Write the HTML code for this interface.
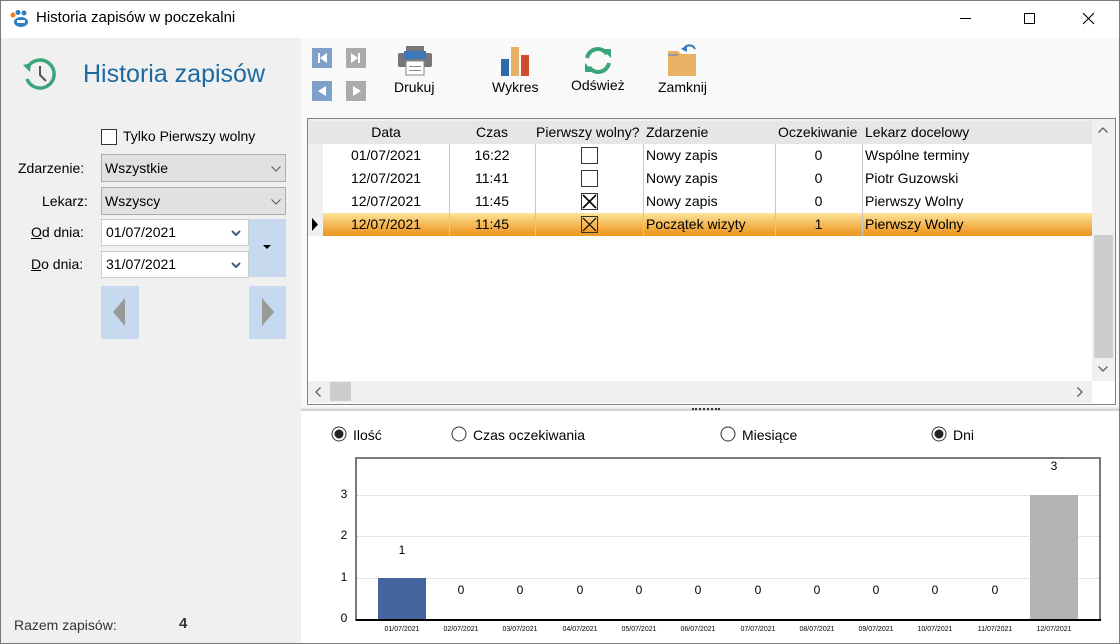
<!DOCTYPE html>
<html><head><meta charset="utf-8"><style>
*{box-sizing:border-box;margin:0;padding:0}
body{width:1120px;height:644px;overflow:hidden;font-family:"Segoe UI","Liberation Sans",sans-serif;font-size:14px;color:#000;background:#f0f0f0;position:relative}
.a{position:absolute}
.t{white-space:nowrap}
.cell{position:absolute;white-space:nowrap;line-height:23px;font-size:14px}
.sel{border:1px solid #adadad;background:#e1e1e1}
.chk{position:absolute;width:17px;height:17px;border:1px solid #333;background:#fff}
.xl{font-size:7px;position:absolute;top:626px;width:60px;text-align:center;color:#000}
.z{position:absolute;font-size:12px;width:20px;text-align:center}
</style></head><body>
<!-- window border -->
<div class="a" style="left:0;top:0;width:1120px;height:644px;border:1px solid #7a7a7a;z-index:50;pointer-events:none"></div>
<!-- title bar -->
<div class="a" style="left:0;top:0;width:1120px;height:38px;background:#fff"></div>
<svg class="a" style="left:10px;top:10px" width="20" height="18" viewBox="0 0 20 18"><circle cx="3" cy="5" r="2.5" fill="#f07c2a"/><circle cx="8" cy="2.5" r="2.5" fill="#2f7fc1"/><circle cx="14" cy="3" r="2.5" fill="#2f7fc1"/><ellipse cx="11" cy="12" rx="7" ry="5" fill="#2f7fc1"/><rect x="7" y="10" width="8" height="3" fill="#fff"/></svg>
<div class="a t" style="left:36px;top:9px;font-size:15px">Historia zapisów w poczekalni</div>
<div class="a" style="left:960px;top:18px;width:11px;height:1px;background:#000"></div>
<div class="a" style="left:1024px;top:13px;width:11px;height:11px;border:1px solid #000"></div>
<svg class="a" style="left:1082px;top:12px" width="13" height="13"><path d="M1 1L12 12M12 1L1 12" stroke="#000" stroke-width="1.1"/></svg>

<!-- left panel -->
<svg class="a" style="left:22px;top:57px" width="36" height="34" viewBox="0 0 36 34"><path d="M6 10 A14 14 0 1 1 5 22" fill="none" stroke="#3aa57a" stroke-width="3.5"/><path d="M1 8 L9 6 L8 15 Z" fill="#3aa57a"/><path d="M18 9 L18 18 L24 24" fill="none" stroke="#555" stroke-width="2"/></svg>
<div class="a t" style="left:83px;top:60px;font-size:25px;color:#1c6aa0">Historia zapisów</div>
<div class="chk" style="left:101px;top:129px;width:16px;height:16px"></div>
<div class="a t" style="left:123px;top:128px">Tylko Pierwszy wolny</div>
<div class="a t" style="left:18px;top:160px">Zdarzenie:</div>
<div class="a sel" style="left:101px;top:154px;width:185px;height:28px"></div>
<div class="a t" style="left:105px;top:160px">Wszystkie</div>
<svg class="a" style="left:271px;top:166px" width="10" height="6"><path d="M0.5 0.5L5 5L9.5 0.5" fill="none" stroke="#555"/></svg>
<div class="a t" style="left:42px;top:193px">Lekarz:</div>
<div class="a sel" style="left:101px;top:187px;width:185px;height:28px"></div>
<div class="a t" style="left:105px;top:193px">Wszyscy</div>
<svg class="a" style="left:271px;top:199px" width="10" height="6"><path d="M0.5 0.5L5 5L9.5 0.5" fill="none" stroke="#555"/></svg>
<div class="a t" style="left:31px;top:224px"><u>O</u>d dnia:</div>
<div class="a" style="left:101px;top:219px;width:148px;height:27px;background:#fff;border:1px solid #ccc"></div>
<div class="a t" style="left:106px;top:224px">01/07/2021</div>
<svg class="a" style="left:231px;top:230px" width="10" height="6"><path d="M1 1L5 5L9 1" fill="none" stroke="#4a5a7a" stroke-width="2"/></svg>
<div class="a t" style="left:31px;top:256px"><u>D</u>o dnia:</div>
<div class="a" style="left:101px;top:251px;width:148px;height:27px;background:#fff;border:1px solid #ccc"></div>
<div class="a t" style="left:106px;top:256px">31/07/2021</div>
<svg class="a" style="left:231px;top:262px" width="10" height="6"><path d="M1 1L5 5L9 1" fill="none" stroke="#4a5a7a" stroke-width="2"/></svg>
<div class="a" style="left:249px;top:219px;width:37px;height:58px;background:#c7d9ee"></div>
<svg class="a" style="left:263px;top:245px" width="8" height="5"><path d="M0 0H8L4 4Z" fill="#000"/></svg>
<div class="a" style="left:101px;top:286px;width:38px;height:53px;background:#c7d9ee"></div>
<svg class="a" style="left:112px;top:298px" width="14" height="28"><path d="M13 0V28L1 14Z" fill="#999"/></svg>
<div class="a" style="left:249px;top:286px;width:37px;height:53px;background:#c7d9ee"></div>
<svg class="a" style="left:261px;top:298px" width="14" height="28"><path d="M1 0V28L13 14Z" fill="#999"/></svg>
<div class="a t" style="left:14px;top:617px;font-size:14px;color:#333">Razem zapisów:</div>
<div class="a t" style="left:179px;top:615px;font-size:15px;font-weight:bold;color:#333">4</div>

<!-- right area -->
<div class="a" style="left:301px;top:38px;width:818px;height:372px;background:#f9f9f9"></div>
<div class="a" style="left:312px;top:48px;width:20px;height:20px;background:#7fa0c8"></div>
<svg class="a" style="left:312px;top:48px" width="20" height="20"><rect x="6" y="5" width="2" height="10" fill="#fff"/><path d="M15 5V15L8 10Z" fill="#fff"/></svg>
<div class="a" style="left:346px;top:48px;width:20px;height:20px;background:#ababab"></div>
<svg class="a" style="left:346px;top:48px" width="20" height="20"><rect x="12" y="5" width="2" height="10" fill="#fff"/><path d="M5 5V15L12 10Z" fill="#fff"/></svg>
<div class="a" style="left:312px;top:81px;width:20px;height:20px;background:#7fa0c8"></div>
<svg class="a" style="left:312px;top:81px" width="20" height="20"><path d="M14 5V15L6 10Z" fill="#fff"/></svg>
<div class="a" style="left:346px;top:81px;width:20px;height:20px;background:#ababab"></div>
<svg class="a" style="left:346px;top:81px" width="20" height="20"><path d="M7 5V15L15 10Z" fill="#fff"/></svg>
<svg class="a" style="left:398px;top:46px" width="34" height="30" viewBox="0 0 34 30"><rect x="8" y="0" width="18" height="8" fill="#777"/><rect x="0" y="7" width="34" height="14" rx="2" fill="#777"/><rect x="6" y="5" width="22" height="8" fill="#3a78b8"/><rect x="8" y="15" width="18" height="14" fill="#fff" stroke="#888"/><rect x="11" y="20" width="12" height="1" fill="#888"/><rect x="11" y="24" width="12" height="1" fill="#888"/></svg>
<div class="a t" style="left:394px;top:79px">Drukuj</div>
<svg class="a" style="left:500px;top:46px" width="30" height="30"><rect x="1" y="13" width="8" height="17" fill="#2e6aa8"/><rect x="11" y="1" width="8" height="29" fill="#e8b163"/><rect x="21" y="9" width="8" height="21" fill="#d24a2f"/></svg>
<div class="a t" style="left:492px;top:79px">Wykres</div>
<svg class="a" style="left:582px;top:45px" width="32" height="31" viewBox="0 0 32 31"><path d="M5 13 A11 11 0 0 1 25 9" fill="none" stroke="#3aa57a" stroke-width="4"/><path d="M20 4H29V13Z" fill="#3aa57a"/><path d="M27 18 A11 11 0 0 1 7 22" fill="none" stroke="#3aa57a" stroke-width="4"/><path d="M12 27H3V18Z" fill="#3aa57a"/></svg>
<div class="a t" style="left:571px;top:77px">Odśwież</div>
<svg class="a" style="left:668px;top:43px" width="30" height="34"><path d="M0 8H10L13 11H28V33H0Z" fill="#e8b163"/><rect x="0" y="11" width="10" height="2" fill="#999"/><path d="M16 6 A6 6 0 0 1 27 6" fill="none" stroke="#3a78b8" stroke-width="2"/><path d="M13 6L19 2V9Z" fill="#3a78b8"/></svg>
<div class="a t" style="left:658px;top:79px">Zamknij</div>

<!-- grid -->
<div class="a" style="left:307px;top:118px;width:809px;height:287px;border:1px solid #828282;background:#fff"></div>
<div class="a" style="left:308px;top:121px;width:784px;height:23px;background:#e6e6e6"></div>
<div class="a" style="left:308px;top:144px;width:15px;height:92px;background:#f0f0f0"></div>
<div class="a" style="left:308px;top:119px;width:784px;height:2px;background:#f0f0f0"></div>
<div class="cell" style="left:323px;top:121px;width:126px;text-align:center">Data</div>
<div class="cell" style="left:449px;top:121px;width:86px;text-align:center">Czas</div>
<div class="cell" style="left:536px;top:121px">Pierwszy wolny?</div>
<div class="cell" style="left:646px;top:121px">Zdarzenie</div>
<div class="cell" style="left:778px;top:121px">Oczekiwanie</div>
<div class="cell" style="left:865px;top:121px">Lekarz docelowy</div>
<div class="a" style="left:323px;top:213px;width:769px;height:23px;background:linear-gradient(#fde49a,#f0a030 80%,#ec9a20)"></div>
<div class="a" style="left:449px;top:144px;width:1px;height:92px;background:#c8c8c8"></div>
<div class="a" style="left:535px;top:144px;width:1px;height:92px;background:#c8c8c8"></div>
<div class="a" style="left:643px;top:144px;width:1px;height:92px;background:#c8c8c8"></div>
<div class="a" style="left:775px;top:144px;width:1px;height:92px;background:#c8c8c8"></div>
<div class="a" style="left:862px;top:144px;width:1px;height:92px;background:#c8c8c8"></div>
<svg class="a" style="left:311px;top:218px" width="8" height="13"><path d="M1 0V13L7 6.5Z" fill="#000"/></svg>

<div class="cell" style="left:323px;top:144px;width:126px;text-align:center">01/07/2021</div>
<div class="cell" style="left:449px;top:144px;width:86px;text-align:center">16:22</div>
<div class="chk" style="left:581px;top:147px"></div>
<div class="cell" style="left:646px;top:144px">Nowy zapis</div>
<div class="cell" style="left:775px;top:144px;width:87px;text-align:center">0</div>
<div class="cell" style="left:865px;top:144px">Wspólne terminy</div>

<div class="cell" style="left:323px;top:167px;width:126px;text-align:center">12/07/2021</div>
<div class="cell" style="left:449px;top:167px;width:86px;text-align:center">11:41</div>
<div class="chk" style="left:581px;top:170px"></div>
<div class="cell" style="left:646px;top:167px">Nowy zapis</div>
<div class="cell" style="left:775px;top:167px;width:87px;text-align:center">0</div>
<div class="cell" style="left:865px;top:167px">Piotr Guzowski</div>

<div class="cell" style="left:323px;top:190px;width:126px;text-align:center">12/07/2021</div>
<div class="cell" style="left:449px;top:190px;width:86px;text-align:center">11:45</div>
<div class="chk" style="left:581px;top:193px"></div>
<svg class="a" style="left:581px;top:193px" width="17" height="17"><path d="M2 2L15 15M15 2L2 15" stroke="#000" stroke-width="1.6"/></svg>
<div class="cell" style="left:646px;top:190px">Nowy zapis</div>
<div class="cell" style="left:775px;top:190px;width:87px;text-align:center">0</div>
<div class="cell" style="left:865px;top:190px">Pierwszy Wolny</div>

<div class="cell" style="left:323px;top:213px;width:126px;text-align:center">12/07/2021</div>
<div class="cell" style="left:449px;top:213px;width:86px;text-align:center">11:45</div>
<div class="chk" style="left:581px;top:216px;background:transparent"></div>
<svg class="a" style="left:581px;top:216px" width="17" height="17"><path d="M2 2L15 15M15 2L2 15" stroke="#000" stroke-width="1.2"/></svg>
<div class="cell" style="left:646px;top:213px">Początek wizyty</div>
<div class="cell" style="left:775px;top:213px;width:87px;text-align:center">1</div>
<div class="cell" style="left:865px;top:213px">Pierwszy Wolny</div>

<!-- scrollbars -->
<div class="a" style="left:1092px;top:119px;width:23px;height:262px;background:#f0f0f0"></div>
<div class="a" style="left:1094px;top:235px;width:19px;height:123px;background:#cdcdcd"></div>
<svg class="a" style="left:1098px;top:127px" width="10" height="6"><path d="M0.5 5.5L5 1L9.5 5.5" fill="none" stroke="#606060" stroke-width="1.3"/></svg>
<svg class="a" style="left:1098px;top:366px" width="10" height="6"><path d="M0.5 0.5L5 5L9.5 0.5" fill="none" stroke="#606060" stroke-width="1.3"/></svg>
<div class="a" style="left:308px;top:381px;width:784px;height:22px;background:#f0f0f0"></div>
<div class="a" style="left:330px;top:382px;width:21px;height:19px;background:#cdcdcd"></div>
<svg class="a" style="left:315px;top:387px" width="6" height="10"><path d="M5.5 0.5L1 5L5.5 9.5" fill="none" stroke="#606060" stroke-width="1.3"/></svg>
<svg class="a" style="left:1077px;top:387px" width="6" height="10"><path d="M0.5 0.5L5 5L0.5 9.5" fill="none" stroke="#606060" stroke-width="1.3"/></svg>
<div class="a" style="left:301px;top:407px;width:818px;height:4px;background:linear-gradient(#f5f5f5,#c8c8c8)"></div>
<div class="a" style="left:692px;top:408px;width:28px;height:2px;border-top:2px dotted #333"></div>

<!-- bottom panel -->
<div class="a" style="left:301px;top:411px;width:818px;height:232px;background:#fff"></div>
<svg class="a" style="left:331px;top:426px" width="16" height="16"><circle cx="8" cy="8" r="7" fill="#fff" stroke="#333"/><circle cx="8" cy="8" r="4.5" fill="#222"/></svg>
<div class="a t" style="left:353px;top:427px">Ilość</div>
<svg class="a" style="left:451px;top:426px" width="16" height="16"><circle cx="8" cy="8" r="7" fill="#fff" stroke="#333"/></svg>
<div class="a t" style="left:473px;top:427px">Czas oczekiwania</div>
<svg class="a" style="left:720px;top:426px" width="16" height="16"><circle cx="8" cy="8" r="7" fill="#fff" stroke="#333"/></svg>
<div class="a t" style="left:742px;top:427px">Miesiące</div>
<svg class="a" style="left:931px;top:426px" width="16" height="16"><circle cx="8" cy="8" r="7" fill="#fff" stroke="#333"/><circle cx="8" cy="8" r="4.5" fill="#222"/></svg>
<div class="a t" style="left:953px;top:427px">Dni</div>

<!-- chart -->
<div class="a" style="left:355px;top:457px;width:746px;height:164px;border-left:2px solid #7a7a7a;border-top:2px solid #7a7a7a;border-right:2px solid #7a7a7a"></div>
<div class="a" style="left:357px;top:495px;width:742px;border-top:1px dotted #ccc"></div>
<div class="a" style="left:357px;top:536px;width:742px;border-top:1px dotted #ccc"></div>
<div class="a" style="left:357px;top:578px;width:742px;border-top:1px dotted #ccc"></div>
<div class="z" style="left:334px;top:487px">3</div>
<div class="z" style="left:334px;top:528px">2</div>
<div class="z" style="left:334px;top:570px">1</div>
<div class="z" style="left:334px;top:611px">0</div>
<div class="a" style="left:378px;top:578px;width:48px;height:41px;background:#4464a0"></div>
<div class="a" style="left:1030px;top:495px;width:48px;height:124px;background:#b3b3b3"></div>
<div class="a" style="left:356px;top:619px;width:745px;height:2px;background:#000"></div>
<div class="z" style="left:392px;top:543px">1</div>
<div class="z" style="left:451px;top:583px">0</div>
<div class="z" style="left:510px;top:583px">0</div>
<div class="z" style="left:570px;top:583px">0</div>
<div class="z" style="left:629px;top:583px">0</div>
<div class="z" style="left:688px;top:583px">0</div>
<div class="z" style="left:748px;top:583px">0</div>
<div class="z" style="left:807px;top:583px">0</div>
<div class="z" style="left:866px;top:583px">0</div>
<div class="z" style="left:925px;top:583px">0</div>
<div class="z" style="left:985px;top:583px">0</div>
<div class="z" style="left:1044px;top:459px">3</div>
<div class="xl" style="left:372px">01/07/2021</div>
<div class="xl" style="left:431px">02/07/2021</div>
<div class="xl" style="left:490px">03/07/2021</div>
<div class="xl" style="left:550px">04/07/2021</div>
<div class="xl" style="left:609px">05/07/2021</div>
<div class="xl" style="left:668px">06/07/2021</div>
<div class="xl" style="left:728px">07/07/2021</div>
<div class="xl" style="left:787px">08/07/2021</div>
<div class="xl" style="left:846px">09/07/2021</div>
<div class="xl" style="left:905px">10/07/2021</div>
<div class="xl" style="left:965px">11/07/2021</div>
<div class="xl" style="left:1024px">12/07/2021</div>
</body></html>
